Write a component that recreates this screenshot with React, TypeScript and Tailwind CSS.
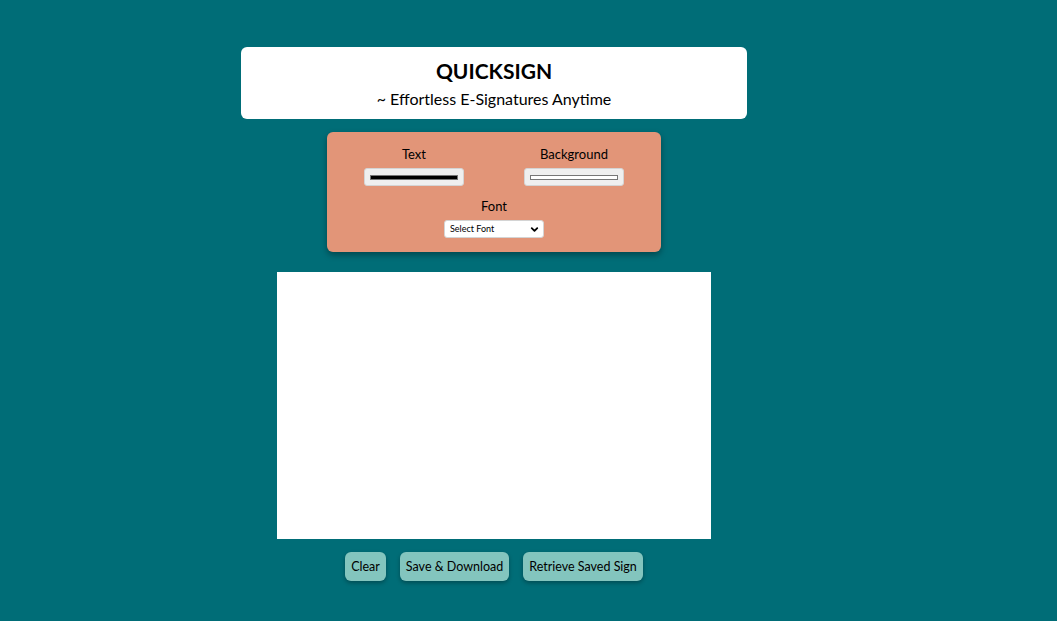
import React from "react";
import { ChevronDown } from "lucide-react";

const ColorSwatch = ({ label, fill }: { label: string; fill: string }) => {
  return (
    <div className="flex flex-col items-center w-[100px]">
      <label className="text-[13px] leading-[16px] text-black mb-[6px]">{label}</label>
      <div className="w-[100px] h-[18px] bg-[#efefef] border border-[#d4d4d4] rounded-[3px] flex items-center px-[5px]">
        <div className={`w-full h-[5px] border border-[#767676] ${fill}`} />
      </div>
    </div>
  );
};

const App = () => {
  return (
    <div
      className="min-h-[621px] w-full bg-[#006d77] text-black"
      style={{ fontFamily: '"Lato", "DejaVu Sans", sans-serif' }}
    >
      <div className="w-[988px] flex flex-col items-center pt-[47px]">
        <div className="w-[506px] h-[72px] bg-white rounded-[6px] flex flex-col items-center pt-[10px]">
          <h1 className="text-[21px] leading-[28px] font-bold">QUICKSIGN</h1>
          <p className="text-[16px] leading-[20px] mt-[4px]">~ Effortless E-Signatures Anytime</p>
        </div>

        <div className="mt-[13px] w-[334px] h-[120px] bg-[#e29578] rounded-[6px] shadow-[0_3px_6px_rgba(0,0,0,0.35)] flex flex-col items-center pt-[14px]">
          <div className="flex gap-[60px]">
            <ColorSwatch label="Text" fill="bg-black" />
            <ColorSwatch label="Background" fill="bg-white" />
          </div>
          <label className="text-[13px] leading-[16px] mt-[12px] mb-[6px]">Font</label>
          <div className="w-[100px] h-[18px] bg-white border border-[#d4d4d4] rounded-[3px] flex items-center justify-between pl-[5px] pr-[3px]">
            <span className="text-[9px] leading-[10px]">Select Font</span>
            <ChevronDown className="w-[11px] h-[11px]" strokeWidth={4} />
          </div>
        </div>

        <div className="mt-[20px] w-[434px] h-[267px] bg-white" />

        <div className="mt-[13px] flex gap-[14px]">
          {["Clear", "Save & Download", "Retrieve Saved Sign"].map((t) => (
            <button
              key={t}
              className="h-[29px] px-[6px] pt-[2px] bg-[#83c5be] rounded-[6px] shadow-[0_2px_4px_rgba(0,0,0,0.3)] text-[12.5px] text-black"
            >
              {t}
            </button>
          ))}
        </div>
      </div>
    </div>
  );
};

export default App;
